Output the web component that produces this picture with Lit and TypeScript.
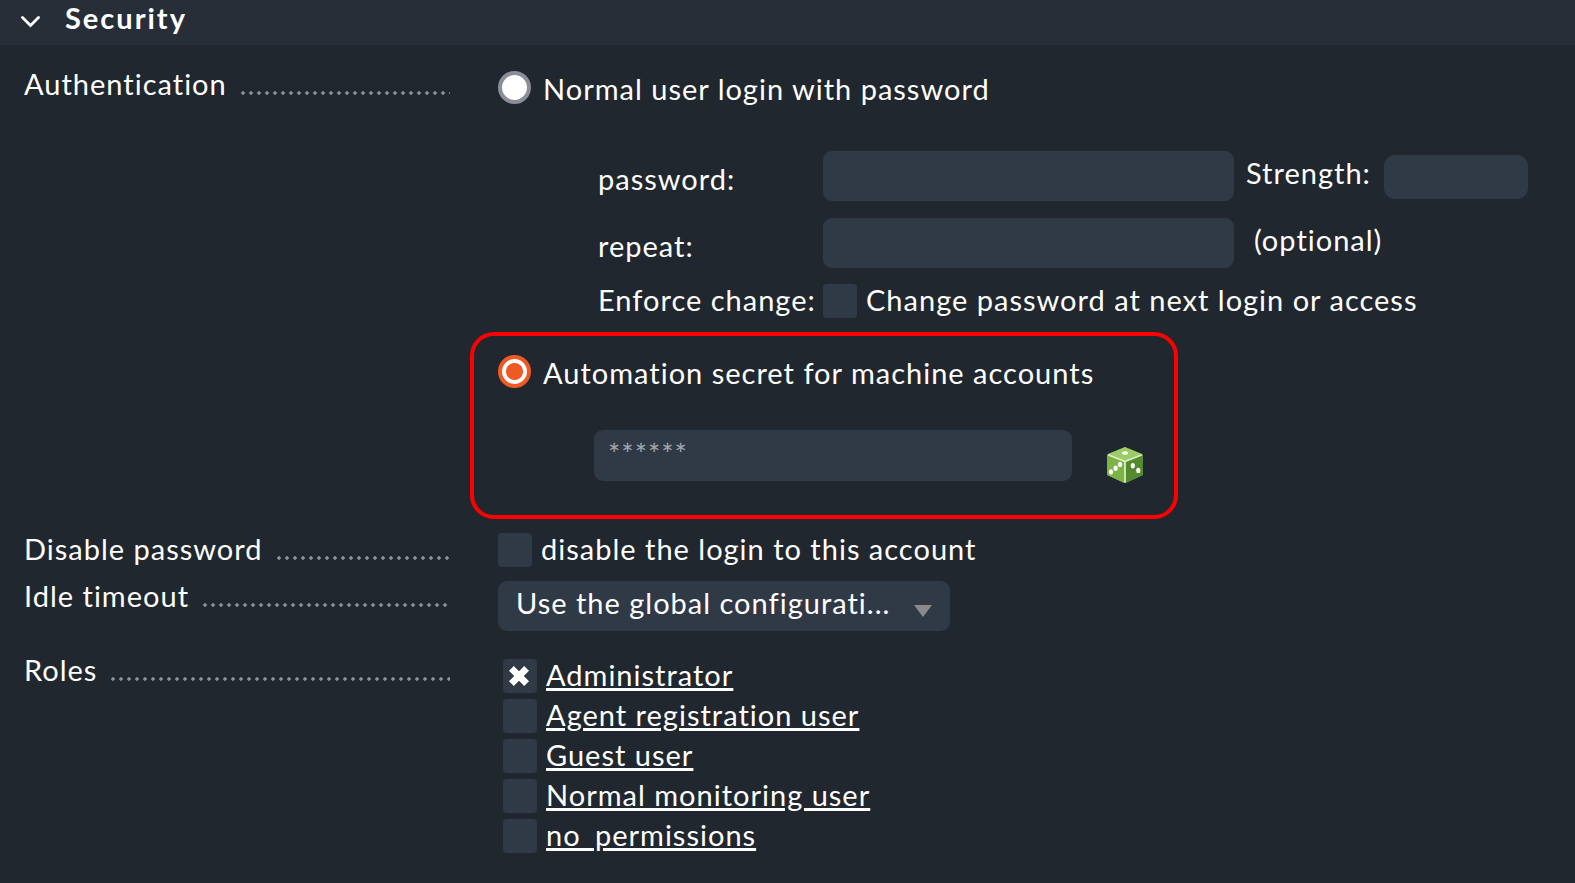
import { LitElement, html, css, svg } from "lit";
import { customElement, state } from "lit/decorators.js";

interface Role {
  id: string;
  title: string;
  assigned: boolean;
}

const chevron = svg`<path d="M1.5 1.5 L9.5 9.5 L17.5 1.5" fill="none" stroke="#fff" stroke-width="2.8" stroke-linecap="round" stroke-linejoin="miter"/>`;

const dice = svg`
  <path d="M18 0.5 L35.5 7.5 V28 L18 36 L0.5 28 V7.5 Z" fill="#dcedc8"/>
  <path d="M18 0 L35 7 L18 13.6 L1 7 Z" fill="#9ccc65"/>
  <path d="M0 8.2 L17.1 15 V36 L0 28 Z" fill="#7cb342"/>
  <path d="M36 8.2 L18.9 15 V36 L36 28 Z" fill="#558b2f"/>
  <ellipse cx="18" cy="6" rx="3" ry="1.8" fill="#fff"/>
  <ellipse cx="13" cy="17.4" rx="2.1" ry="2.7" fill="#fff"/>
  <ellipse cx="8.6" cy="21.3" rx="2.1" ry="2.7" fill="#fff"/>
  <ellipse cx="4" cy="25" rx="2.1" ry="2.7" fill="#fff"/>
  <ellipse cx="25.8" cy="18.7" rx="2.1" ry="2.7" fill="#fff"/>
  <ellipse cx="31.3" cy="23.4" rx="2.1" ry="2.7" fill="#fff"/>`;

@customElement("app-root")
export class AppRoot extends LitElement {
  static styles = css`
    :host {
      display: block;
      box-sizing: border-box;
      min-height: 100vh;
      background: #21272e;
      color: #fff;
      font-family: Lato, "Liberation Sans", sans-serif;
      font-size: 29px;
      line-height: 36px;
      letter-spacing: 1px;
      white-space: nowrap;
    }
    *, *::before { box-sizing: border-box; }
    input, select, button, h2 {
      margin: 0;
      padding: 0;
      border: 0;
      font: inherit;
      letter-spacing: inherit;
      color: inherit;
    }
    input, select { appearance: none; background-color: #303946; }

    .header { background: #272e37; height: 45px; }
    .toggle {
      display: flex;
      align-items: center;
      gap: 25px;
      padding: 0 21px 9px;
      height: 45px;
      background: none;
      font-weight: 700;
      letter-spacing: 2px;
      cursor: pointer;
    }
    .chevron { width: 19px; height: 12px; margin-top: 7px; }

    .form { padding: 21px 24px 24px; }
    .row {
      display: grid;
      grid-template-columns: 426px minmax(0, 1fr);
      column-gap: 48px;
    }
    .legend { display: flex; gap: 14px; height: 36px; overflow: hidden; }
    .dots {
      flex: 1;
      height: 4px;
      margin-top: 25px;
      background: radial-gradient(circle at 2px 2px, #8f9398 1.4px, transparent 2.1px) 0 0 / 8px 4px repeat-x;
    }

    .auth { padding-top: 5px; }
    .option { display: flex; gap: 12px; }
    .radio {
      flex: none;
      width: 33px;
      height: 33px;
      border: 4px solid #8d8d9a;
      border-radius: 50%;
      background: #fff;
    }
    .radio:checked {
      border-color: #ef5a24;
      background: radial-gradient(circle, #ef5a24 8px, #fff 9px);
    }

    .passwords {
      display: grid;
      grid-template-columns: 225px minmax(0, 411px) minmax(0, 1fr);
      grid-template-rows: 67px 66px 34px;
      margin: 44px 0 14px 100px;
    }
    .name { padding-top: 10px; }
    .text { width: 100%; height: 50px; border-radius: 9px; padding: 0 14px; }
    .side { display: flex; gap: 13px; padding: 4px 0 0 12px; }
    .optional { padding-left: 20px; }
    .meter { flex: none; width: 144px; height: 44px; border-radius: 11px; background: #303946; }
    .check { display: flex; align-items: center; gap: 9px; height: 34px; }
    .wide { grid-column: 2 / 4; }
    .caption { padding-bottom: 2px; height: 36px; line-height: 34px; }
    .box {
      flex: none;
      display: grid;
      place-items: center;
      width: 34px;
      height: 34px;
      border-radius: 4px;
    }
    .box:checked::before {
      content: "";
      width: 20px;
      height: 20px;
      margin-right: 2px;
      background: #fff;
      clip-path: polygon(24% 0, 50% 26%, 76% 0, 100% 24%, 74% 50%, 100% 76%, 76% 100%, 50% 74%, 24% 100%, 0 76%, 26% 50%, 0 24%);
    }

    .highlight {
      width: fit-content;
      margin: 0 0 12px -28px;
      padding: 19px 31px 32px 24px;
      border: 4px solid #f00;
      border-radius: 24px;
    }
    .secret { display: flex; gap: 35px; margin: 39px 0 0 96px; }
    .secret-text {
      width: 478px;
      height: 51px;
      padding: 0 14px 5px;
      border-radius: 9px;
      color: #a3a7ad;
    }
    .generate { width: 36px; height: 36px; margin-top: 17px; background: none; cursor: pointer; }
    .dice { display: block; width: 36px; height: 36px; }

    .disable { padding: 2px 0 11px; }
    .timeout { display: grid; padding: 3px 0 21px; }
    .select, .arrow { grid-area: 1 / 1; }
    .select { width: 452px; height: 50px; padding: 0 50px 6px 18px; border-radius: 9px; }
    .arrow { width: 18px; height: 12px; margin: 24px 0 0 416px; pointer-events: none; }

    .roles { padding: 7px 0 0 5px; display: grid; gap: 6px; }
    .role { color: #fff; text-decoration: underline; text-decoration-thickness: 3px; }
  `;

  @state() private mode = "secret";
  @state() private roles: Role[] = [
    { id: "admin", title: "Administrator", assigned: true },
    { id: "agent", title: "Agent registration user", assigned: false },
    { id: "guest", title: "Guest user", assigned: false },
    { id: "user", title: "Normal monitoring user", assigned: false },
    { id: "none", title: "no_permissions", assigned: false },
  ];

  private legend(text: string, target: string) {
    return html`<div class="legend"><label for=${target}>${text}</label><span class="dots"></span></div>`;
  }

  private radio(value: string, text: string) {
    return html`<label class="option">
      <input class="radio" type="radio" name="auth" id=${value} .checked=${this.mode === value}
        @change=${() => (this.mode = value)}>
      <span>${text}</span>
    </label>`;
  }

  render() {
    return html`
      <div class="header">
        <h2><button class="toggle" type="button" aria-expanded="true">
          <svg class="chevron" viewBox="0 0 19 12" aria-hidden="true">${chevron}</svg>Security
        </button></h2>
      </div>
      <form class="form">
        <div class="row">
          ${this.legend("Authentication", "login")}
          <div class="auth">
            ${this.radio("login", "Normal user login with password")}
            <div class="passwords">
              <label class="name" for="pw">password:</label>
              <input class="text" id="pw" type="password">
              <div class="side"><span>Strength:</span><span class="meter"></span></div>
              <label class="name" for="pw2">repeat:</label>
              <input class="text" id="pw2" type="password">
              <div class="side optional">(optional)</div>
              <label class="check" for="enforce"><span class="caption">Enforce change:</span></label>
              <div class="check wide">
                <input class="box" id="enforce" type="checkbox">
                <label class="caption" for="enforce">Change password at next login or access</label>
              </div>
            </div>
            <div class="highlight">
              ${this.radio("secret", "Automation secret for machine accounts")}
              <div class="secret">
                <input class="secret-text" type="text" value="******" aria-label="Automation secret">
                <button class="generate" type="button" aria-label="Create random secret">
                  <svg class="dice" viewBox="0 0 36 36" aria-hidden="true">${dice}</svg>
                </button>
              </div>
            </div>
          </div>
        </div>
        <div class="row">
          ${this.legend("Disable password", "locked")}
          <div class="disable">
            <div class="check">
              <input class="box" id="locked" type="checkbox">
              <label class="caption" for="locked">disable the login to this account</label>
            </div>
          </div>
        </div>
        <div class="row">
          ${this.legend("Idle timeout", "idle")}
          <div class="timeout">
            <select class="select" id="idle"><option>Use the global configurati...</option></select>
            <svg class="arrow" viewBox="0 0 18 12" aria-hidden="true"><path d="M0 0 H18 L9 12 Z" fill="#8a8a8a"/></svg>
          </div>
        </div>
        <div class="row">
          ${this.legend("Roles", "admin")}
          <div class="roles">
            ${this.roles.map((role) => html`<div class="check">
              <input class="box" id=${role.id} type="checkbox" .checked=${role.assigned}>
              <label class="caption" for=${role.id}><a class="role" href="#${role.id}">${role.title}</a></label>
            </div>`)}
          </div>
        </div>
      </form>
    `;
  }
}
